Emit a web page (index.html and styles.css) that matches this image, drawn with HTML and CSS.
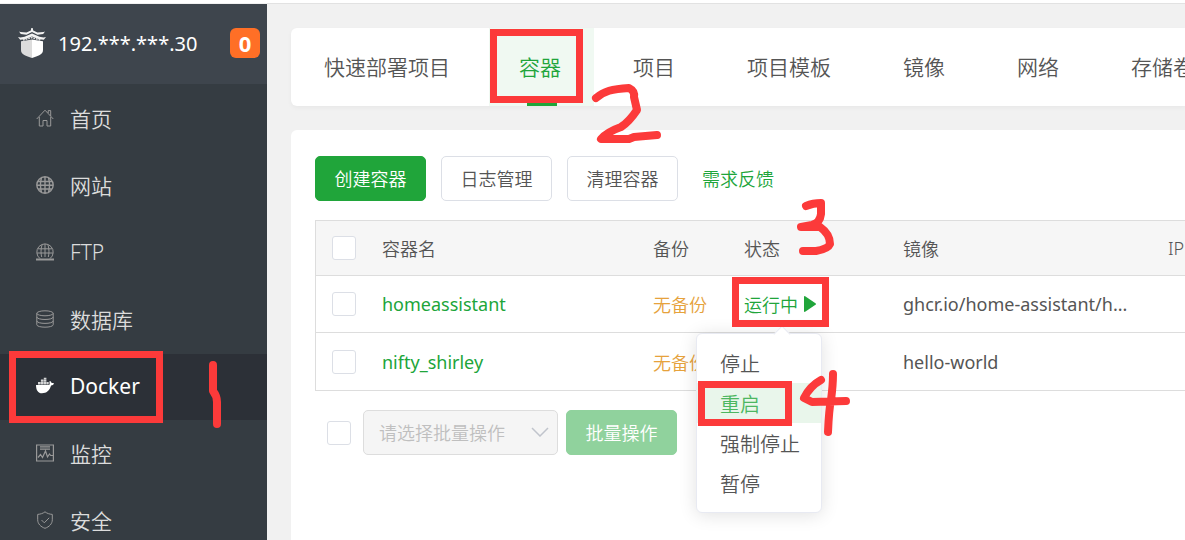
FILE: index.html
```html
<!DOCTYPE html>
<html lang="zh-CN">
<head>
<meta charset="utf-8">
<title>Docker - 容器</title>
<link rel="stylesheet" href="styles.css">
</head>
<body>
<div class="app">
  <aside class="sidebar">
    <header class="brand">
      <svg class="logo" viewBox="0 0 28 30" aria-hidden="true">
        <path d="M13.300 0h1.400l.5 2.500 4.300 1.900 6-.4 1.500-.5-1.800 2.500-5.700.7-5.500-2.600-5.500 2.600-5.700-.7L1 3.500l1.500.5 6 .4 4.300-1.900z" fill="#f2f2f2"/>
        <path d="M0 9l2.500.4 4-.7L14 5.600l7.500 3.100 4 .7L28 9l-2.200 2.700-4.800-.4-7-2.700-7 2.700-4.800.4z" fill="#f2f2f2"/>
        <path d="M5 12.100l9-2.600 9 2.600" fill="none" stroke="#ddd" stroke-width="1.600" stroke-dasharray="1.800 .9"/>
        <path d="M3 13.300l3.500-.5 7.500-1.300V30C8 28 3 26.800 3 22z" fill="#dcdcdc"/>
        <path d="M25 13.300l-3.500-.5L14 11.500V30c6-2 11-3.200 11-8z" fill="#fff"/>
      </svg>
      <span class="host">192.***.***.30</span>
      <span class="count">0</span>
    </header>
    <nav class="menu">
      <a class="item" href="#">
        <svg viewBox="0 0 18 18"><path d="M.7 10L9 1.200 17.300 10M3.300 8v9h3.700v-5.500h4V17h3.700V8M12.200 4V1.600h2.500V7"/></svg>首页</a>
      <a class="item" href="#">
        <svg viewBox="0 0 18 18"><path d="M9 .8a8.200 8.200 0 1 0 0 16.400A8.200 8.200 0 1 0 9 .8zM9 1v16M5.500 1.800c-1.300 4.500-1.300 10 0 14.400M12.500 1.800c1.300 4.500 1.300 10 0 14.400M1.800 5.500h14.400M1 9.200h16M1.800 13h14.400" stroke-width="1.400"/></svg>网站</a>
      <a class="item" href="#">
        <svg viewBox="0 0 18 18"><path d="M4 15.600A8.200 8.200 0 1 1 14 15.600M9 1v13M6 2c-1.300 4-1.200 8.500-.3 12M12 2c1.300 4 1.200 8.500.3 12M2 5.800h14M1 10h16"/><path d="M0 16.500h18" stroke-width="2"/></svg>FTP</a>
      <a class="item" href="#">
        <svg viewBox="0 0 18 18"><ellipse cx="9" cy="3.300" rx="8.200" ry="2.500"/><path d="M.8 3.300v11.400c0 3.300 16.400 3.300 16.400 0V3.300M.8 7c0 3.300 16.400 3.300 16.400 0M.8 10.900c0 3.300 16.400 3.300 16.400 0"/></svg>数据库</a>
      <a class="item active" href="#">
        <svg viewBox="0 0 18 18"><path class="solid" d="M0 8h13.200c.7-.7.600-2.200.1-3.200l.8-.9c1 .7 1.300 1.300 1.500 2.200.9-.1 1.800 0 2.400.5-.5 1.200-1.500 1.900-2.900 2C13.500 13.800 10.500 16.300 6 16.300 2 16.300 0 13.200 0 8z"/><path class="blocks" d="M2 5h2.600v2.600H2zM4.900 5h2.600v2.600H4.900zM7.800 5h2.600v2.600H7.800zM10.700 5h2v2.600h-2zM4.900 2.400h2.600v2.300H4.900zM7.800 2.400h2.600v2.300H7.800zM7.800.8h2.600v1.400H7.800z"/></svg>Docker</a>
      <a class="item" href="#">
        <svg viewBox="0 0 18 18"><path d="M.6 1h16.800v16H.6zM4 2.800h10M4 5.200h10M2 13.500l2.500-3 2 3L9.500 7l2 6 2-3 1.200 1.500H17" stroke-width="1.200"/></svg>监控</a>
      <a class="item" href="#">
        <svg viewBox="0 0 18 18"><path d="M9 .8c2 1.600 4.500 2.400 7.300 2.600v5.400c0 4-3 7-7.300 8.500-4.300-1.500-7.300-4.500-7.300-8.500V3.400C4.500 3.200 7 2.400 9 .8zM5.500 9l2.800 2.800 4.900-5"/></svg>安全</a>
    </nav>
  </aside>

  <main class="main">
    <nav class="tabs">
      <a class="tab" href="#">快速部署项目</a>
      <a class="tab current" href="#">容器</a>
      <a class="tab" href="#">项目</a>
      <a class="tab" href="#">项目模板</a>
      <a class="tab" href="#">镜像</a>
      <a class="tab" href="#">网络</a>
      <a class="tab" href="#">存储卷</a>
    </nav>

    <section class="panel">
      <div class="toolbar">
        <button class="btn primary" type="button">创建容器</button>
        <button class="btn" type="button">日志管理</button>
        <button class="btn" type="button">清理容器</button>
        <a class="feedback" href="#">需求反馈</a>
      </div>

      <table class="grid">
        <colgroup><col class="c-check"><col class="c-name"><col class="c-backup"><col class="c-state"><col class="c-image"><col class="c-ip"></colgroup>
        <thead>
          <tr><th><input class="check" type="checkbox" aria-label="全选"></th><th>容器名</th><th>备份</th><th>状态</th><th>镜像</th><th>IP</th></tr>
        </thead>
        <tbody>
          <tr>
            <td><input class="check" type="checkbox" aria-label="homeassistant"></td>
            <td><a class="name" href="#">homeassistant</a></td>
            <td><a class="warn" href="#">无备份</a></td>
            <td class="state-cell">
              <button class="state" type="button">运行中<svg viewBox="0 0 12 16" aria-hidden="true"><path d="M0 1Q0-.5 1.500.4L11.500 7.200Q12.500 8 11.500 8.800L1.500 15.600Q0 16.500 0 15z"/></svg></button>
              <div class="dropdown">
                <button type="button">停止</button>
                <button class="hover" type="button">重启</button>
                <button type="button">强制停止</button>
                <button type="button">暂停</button>
              </div>
            </td>
            <td>ghcr.io/home-assistant/h...</td>
            <td></td>
          </tr>
          <tr>
            <td><input class="check" type="checkbox" aria-label="nifty_shirley"></td>
            <td><a class="name" href="#">nifty_shirley</a></td>
            <td><a class="warn" href="#">无备份</a></td>
            <td></td>
            <td>hello-world</td>
            <td></td>
          </tr>
        </tbody>
      </table>

      <div class="batch">
        <input class="check" type="checkbox" aria-label="选择全部容器">
        <div class="select-wrap">
          <select class="select" aria-label="批量操作" disabled><option>请选择批量操作</option></select>
          <svg class="chevron" viewBox="0 0 18 10" aria-hidden="true"><path d="M1 1l8 8 8-8"/></svg>
        </div>
        <button class="btn primary disabled" type="button" disabled>批量操作</button>
      </div>
    </section>
  </main>
</div>

<svg class="marks" width="1185" height="540" viewBox="0 0 1185 540" aria-hidden="true">
  <g class="boxes">
    <rect x="12.500" y="354.500" width="147" height="65"/>
    <rect x="493.500" y="32.500" width="86" height="67"/>
    <rect x="735.500" y="280.500" width="90" height="43"/>
    <rect x="701.500" y="384.500" width="87" height="38"/>
  </g>
  <g class="strokes">
    <path d="M213 365V391Q217 396 217 402V424"/>
    <path d="M596 98C604 91 612 89 629 88Q635 91 634 97L637 110Q629 122 621 127Q607 132 601 139H629L634 137L657 135"/>
    <path d="M806 206Q813 203 821 203V214Q820 223 812 225L801 227H820Q830 234 830 244Q828 249 816 251H803"/>
    <path d="M821 380Q810 386 804 398L812 402L846 401M833 374Q833 385 831 400Q829 409 828 432"/>
  </g>
</svg>
</body>
</html>
```
FILE: styles.css
```css
* { box-sizing: border-box; }

body {
  margin: 0;
  overflow: hidden;
  background: #f1f1f1;
  color: #555;
  font-family: "Noto Sans", "Noto Sans CJK SC", sans-serif;
  font-size: 18px;
  font-weight: 350;
}

a { color: inherit; text-decoration: none; }
button, select, input { font: inherit; color: inherit; margin: 0; }

.app {
  display: flex;
  height: 100vh;
  border-top: 3px solid #fff;
}

.sidebar {
  flex: none;
  width: 267px;
  margin-top: 1px;
  background: #353c42;
  color: #dcdcdc;
}

.brand {
  display: flex;
  align-items: center;
  height: 80px;
  padding: 0 7px 2px 18px;
  background: #3e454d;
  color: #fff;
  font-size: 20px;
  font-weight: 400;
}
.logo { width: 28px; height: 30px; margin-right: 12px; }
.host { flex: 1; }
.count {
  width: 30px;
  height: 30px;
  border-radius: 6px;
  background: #ff6f26;
  font-size: 22px;
  font-weight: 700;
  line-height: 30px;
  text-align: center;
}

.menu { display: grid; gap: 1px; padding-top: 2px; }
.item {
  display: flex;
  align-items: center;
  gap: 16px;
  height: 66px;
  padding: 0 0 2px 36px;
  font-size: 21px;
}
.item svg {
  width: 18px;
  height: 18px;
  fill: none;
  stroke: #999;
}
.item .solid, .item .blocks { fill: #fff; stroke: none; }
.item .blocks { fill: #d5d6d7; }
.item.active { background: #2c3037; color: #fff; font-weight: 400; }

.main {
  display: flex;
  flex: 1;
  flex-direction: column;
  gap: 24px;
  min-width: 0;
  padding: 24px 0 0 24px;
  overflow: hidden;
  border-top: 1px solid #e2e2e2;
}

.tabs {
  display: flex;
  flex: none;
  gap: 9px;
  height: 78px;
  border-radius: 6px 0 0 6px;
  background: #fff;
  box-shadow: 0 2px 5px rgba(0, 0, 0, .04);
  font-size: 21px;
  line-height: 78px;
}
.tab { flex: none; padding: 0 33px 0 30px; }
.tab:first-child { padding: 0 30px 0 33px; }
.tab.current {
  position: relative;
  background: #f0f9f2;
  color: #20a53a;
}
.tab.current::after {
  content: "";
  position: absolute;
  bottom: 0;
  left: 50%;
  width: 30px;
  height: 3px;
  margin-left: -15px;
  background: #20a53a;
}

.panel {
  flex: 1;
  padding: 26px 0 0 24px;
  border-radius: 6px 0 0 0;
  background: #fff;
}

.toolbar { display: flex; align-items: center; gap: 15px; margin-bottom: 19px; }
.btn {
  width: 111px;
  height: 45px;
  padding: 0 0 2px;
  border: 1px solid #dcdfe6;
  border-radius: 5px;
  background: #fff;
}
.btn.primary { border-color: #20a53a; background: #20a53a; color: #fff; }
.btn.disabled { border-color: #90d29d; background: #90d29d; }
.feedback { margin-left: 9px; padding-bottom: 2px; color: #20a53a; }

.grid {
  width: 1200px;
  border: 1px solid #ddd;
  border-spacing: 0;
  table-layout: fixed;
}
.c-check { width: 54px; }
.c-name { width: 271px; }
.c-backup { width: 91px; }
.c-state { width: 159px; }
.c-image { width: 265px; }
.grid th, .grid td {
  height: 57px;
  padding: 0 0 0 12px;
  border-bottom: 1px solid #ddd;
  text-align: left;
  white-space: nowrap;
}
.grid th { height: 55px; background: #f6f6f6; font-weight: 350; }
.grid th:first-child, .grid td:first-child { padding-left: 16px; }
.grid tbody tr:last-child td { border-bottom: 0; }
.grid td { font-weight: 400; }
.name { color: #20a53a; }
.warn { color: #e6a23c; font-weight: 350; }

.check {
  appearance: none;
  display: block;
  flex: none;
  width: 24px;
  height: 24px;
  border: 1px solid #dcdfe6;
  border-radius: 3px;
  background: #fff;
}

.state-cell { position: relative; }
.state {
  display: flex;
  align-items: center;
  gap: 6px;
  padding: 0;
  border: 0;
  background: none;
  color: #20a53a;
  font-weight: 350;
}
.state svg { width: 12px; height: 16px; fill: #20a53a; }

.dropdown {
  position: absolute;
  z-index: 2;
  top: calc(100% + 1px);
  left: -36px;
  width: 126px;
  padding: 9px 0;
  border: 1px solid #e8eaf2;
  border-radius: 6px;
  background: #fff;
  box-shadow: 0 2px 18px rgba(0, 0, 0, .12);
}
.dropdown::before {
  content: "";
  position: absolute;
  top: -6px;
  left: 79px;
  width: 11px;
  height: 11px;
  border: solid #e8eaf2;
  border-width: 1px 0 0 1px;
  background: #fff;
  transform: rotate(45deg);
}
.dropdown button {
  display: block;
  width: 100%;
  height: 40px;
  padding: 0 0 0 23px;
  border: 0;
  background: none;
  font-size: 20px;
  font-weight: 350;
  text-align: left;
}
.dropdown .hover { background: #e9f6eb; color: #4db761; }

.batch { display: flex; align-items: center; margin-top: 19px; padding-left: 12px; }
.select-wrap { position: relative; width: 195px; margin: 0 8px 0 12px; }
.select {
  appearance: none;
  display: block;
  width: 100%;
  height: 45px;
  padding: 0 36px 0 15px;
  border: 1px solid #ddd;
  border-radius: 5px;
  background: #f5f5f5;
  color: #bfbfbf;
  opacity: 1;
}
.chevron {
  position: absolute;
  top: 17px;
  right: 9px;
  width: 18px;
  height: 10px;
  fill: none;
  stroke: #c0c4cc;
  stroke-width: 1.5;
}
.batch .btn { color: #fff; }

.marks {
  position: absolute;
  z-index: 5;
  top: 0;
  left: 0;
  fill: none;
  stroke: #fc3a3a;
  pointer-events: none;
}
.boxes { stroke-width: 7; }
.strokes { stroke-width: 8; stroke-linecap: round; stroke-linejoin: round; }
```
